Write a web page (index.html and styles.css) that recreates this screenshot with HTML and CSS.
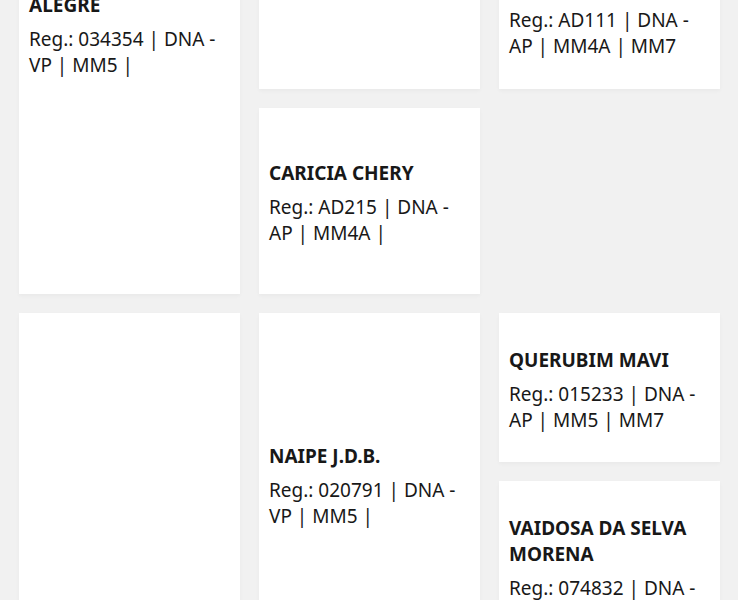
FILE: index.html
```html
<!DOCTYPE html>
<html lang="pt">
<head>
<meta charset="utf-8">
<title>Animais</title>
<link rel="stylesheet" href="styles.css">
</head>
<body>
<main class="grid">
  <article class="card card--a1">
    <div class="card__media media-72"></div>
    <h3 class="card__title">ESTRELA DA VILA ALEGRE</h3>
    <p class="card__info">Reg.: 034354 | DNA - VP | MM5 |</p>
  </article>
  <article class="card card--a2">
    <h3 class="card__title">BONECA</h3>
    <p class="card__info">Reg.: 021140 | DNA - VP | MM5 |</p>
  </article>
  <article class="card card--a3">
    <div class="card__media media-79"></div>
    <h3 class="card__title">ESMERALDA</h3>
    <p class="card__info">Reg.: AD111 | DNA - AP | MM4A | MM7</p>
  </article>
  <article class="card card--b2">
    <div class="card__media media-18"></div>
    <h3 class="card__title">CARICIA CHERY</h3>
    <p class="card__info">Reg.: AD215 | DNA - AP | MM4A |</p>
  </article>
  <article class="card card--c1">
    <div class="card__media media-300"></div>
    <h3 class="card__title">FORMOSA</h3>
    <p class="card__info">Reg.: 018822 | DNA - VP | MM5 |</p>
  </article>
  <article class="card card--c2">
    <div class="card__media media-96"></div>
    <h3 class="card__title">NAIPE J.D.B.</h3>
    <p class="card__info">Reg.: 020791 | DNA - VP | MM5 |</p>
  </article>
  <article class="card card--c3">
    <h3 class="card__title">QUERUBIM MAVI</h3>
    <p class="card__info">Reg.: 015233 | DNA - AP | MM5 | MM7</p>
  </article>
  <article class="card card--d3">
    <h3 class="card__title">VAIDOSA DA SELVA MORENA</h3>
    <p class="card__info">Reg.: 074832 | DNA - VP | MM5 |</p>
  </article>
</main>
</body>
</html>
```
FILE: styles.css
```css
html, body {
  margin: 0;
  padding: 0;
  background: #f1f1f1;
}

body {
  font-family: "Noto Sans", "Open Sans", sans-serif;
  color: #181818;
}

.grid {
  display: grid;
  grid-template-columns: repeat(3, 1fr);
  grid-template-rows: 229px 186px 149px auto;
  gap: 19px;
  padding: 0 18px 0 19px;
  margin-top: -140px;
}

.card {
  background: #ffffff;
  padding: 34px 10px 29px;
  display: flex;
  flex-direction: column;
  box-shadow: 0 2px 4px rgba(0, 0, 0, 0.035);
}

.card--a1 { grid-column: 1; grid-row: 1 / span 2; }
.card--a2 { grid-column: 2; grid-row: 1; }
.card--a3 { grid-column: 3; grid-row: 1; }
.card--b2 { grid-column: 2; grid-row: 2; }
.card--c1 { grid-column: 1; grid-row: 3 / span 2; }
.card--c2 { grid-column: 2; grid-row: 3 / span 2; }
.card--c3 { grid-column: 3; grid-row: 3; }
.card--d3 { grid-column: 3; grid-row: 4; }

.card__media { flex: none; }
.media-18 { height: 18px; }
.media-72 { height: 72px; }
.media-79 { height: 79px; }
.media-96 { height: 96px; }
.media-300 { height: 300px; }

.card__title {
  margin: 0 0 8px;
  font-size: 19px;
  font-weight: 700;
  line-height: 26px;
}

.card__info {
  margin: 0;
  font-size: 19px;
  font-weight: 400;
  line-height: 26px;
}
```
